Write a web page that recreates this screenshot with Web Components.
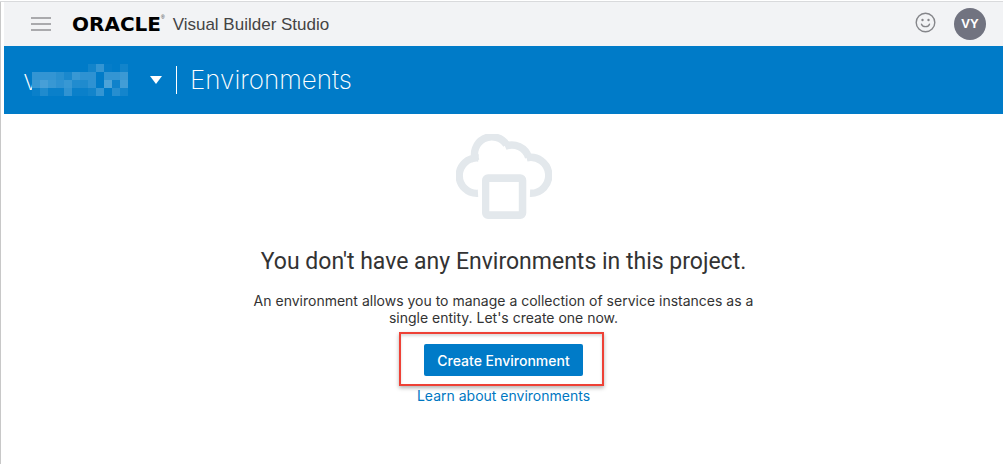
<!DOCTYPE html>
<html lang="en">
<head>
<meta charset="utf-8">
<title>Environments</title>
<style>
body { margin: 0; background: #fff; font-family: Inter, "Liberation Sans", sans-serif; color: #333; }
</style>
</head>
<body>
<vb-app></vb-app>
<script>
const define = (name, html, setup) => customElements.define(name, class extends HTMLElement {
  constructor() {
    super();
    this.attachShadow({ mode: "open" }).innerHTML = html;
    if (setup) setup(this.shadowRoot);
  }
});

define("vb-topbar", `
<style>
:host { display: flex; align-items: center; box-sizing: border-box; height: 44px; padding: 0 17px 0 27px; background: #f2f3f5; }
button { border: 0; padding: 0; background: none; font: inherit; display: block; }
svg { display: block; }
.brand { display: flex; align-items: center; margin-left: 21px; flex: 1; }
.logo { font: bold 20px/24px "DejaVu Sans", sans-serif; color: #000; }
.reg { align-self: flex-start; font: 5px/12px "Liberation Sans", sans-serif; color: #333; }
.product { margin-left: 8px; padding-top: 2px; font: 17px/24px "Liberation Sans", sans-serif; color: #444; }
.feedback { padding-bottom: 4px; }
.avatar { margin-left: 18px; width: 32px; height: 32px; border-radius: 50%; background: #717380; color: #fff; font: bold 13px/32px "Liberation Sans", sans-serif; text-align: center; }
</style>
<button aria-label="Menu"><svg width="20" height="14" viewBox="0 0 20 14" stroke="#929395" stroke-width="1.500"><path d="M0 1h20M0 7h20M0 13h20"/></svg></button>
<div class="brand"><span class="logo">ORACLE</span><span class="reg">®</span><span class="product">Visual Builder Studio</span></div>
<button class="feedback" aria-label="Feedback"><svg width="21" height="21" viewBox="0 0 21 21" fill="none" stroke="#85868a" stroke-width="1.400"><circle cx="10.500" cy="10.500" r="9.300"/><path d="M6.500 12.200c1.200 3.200 6.800 3.200 8 0" stroke-linecap="round"/><circle cx="7.500" cy="8" r="1.200" fill="#85868a" stroke="none"/><circle cx="13.500" cy="8" r="1.200" fill="#85868a" stroke="none"/></svg></button>
<button class="avatar">VY</button>
`);

define("vb-titlebar", `
<style>
:host { display: flex; align-items: center; box-sizing: border-box; height: 68px; padding: 0 19px; background: #007bc8; color: #fff; }
button { display: flex; align-items: center; gap: 22px; border: 0; padding: 0; background: none; color: inherit; }
.name { display: flex; align-items: center; font: 200 28px/32px Inter, sans-serif; }
.initial { width: 9px; text-align: left; }
svg { display: block; }
.mask { position: relative; background: #007bc8; }
h1 { margin: 0 0 0 14px; padding-left: 13px; border-left: 1px solid #fff; font: 200 26px/28px Inter, sans-serif; }
</style>
<button aria-haspopup="true" aria-label="Project"><span class="name"><span class="initial">v</span><svg class="mask" width="96" height="32" viewBox="0 0 12 4" shape-rendering="crispEdges" fill="#fff"></svg></span><svg width="12" height="8" viewBox="0 0 12 8" fill="#fff"><path d="M0 0h12L6 8z"/></svg></button>
<h1>Environments</h1>
`, root => {
  // Redacted project name: opacity (percent) of each mosaic cell
  const cells = [
    [0, 0, 0, 0, 0, 0, 0, 7, 20, 2, 0, 7],
    [20, 20, 20, 16, 10, 22, 18, 18, 0, 20, 20, 23],
    [22, 28, 22, 18, 22, 13, 12, 18, 0, 30, 6, 26],
    [4, 12, 4, 4, 19, 4, 4, 7, 20, 0, 15, 8]
  ];
  root.querySelector(".mask").innerHTML = cells.flatMap((row, y) => row.map((a, x) =>
    `<rect x="${x}" y="${y}" width="1" height="1" fill-opacity="${a / 100}"/>`)).join("");
});

define("vb-empty-state", `
<style>
:host { display: flex; flex-direction: column; align-items: center; padding: 20px 16px; text-align: center; }
svg { display: block; }
h2 { margin: 26px 0 0; font: 400 23px/32px Roboto, sans-serif; color: #333; }
p { margin: 14px 0 0; max-width: 510px; font: 14px/17px Inter, sans-serif; color: #333; }
</style>
<svg width="96" height="86" viewBox="0 0 96 86" fill="none" stroke="#e3e8ec" stroke-width="7.400">
<path d="M22 59.300A17.700 17.700 0 1 1 22.500 24"/>
<path d="M19.900 27A17.400 17.400 0 0 1 50.500 10.700"/>
<path d="M49 12.400A17.500 17.500 0 0 1 72.600 23.500"/>
<path d="M70.600 23.800A18 18 0 1 1 74 59.300"/>
<path fill="#e3e8ec" stroke="none" fill-rule="evenodd" d="M32 40.300h32.300a6 6 0 0 1 6 6v32.700a6 6 0 0 1-6 6H32a6 6 0 0 1-6-6V46.300a6 6 0 0 1 6-6zM33.300 48v29.300h29.500V48z"/>
</svg>
<h2><slot name="title"></slot></h2>
<p><slot name="text"></slot></p>
<slot name="action"></slot>
<slot name="link"></slot>
`);

define("vb-action", `
<style>
:host { display: block; position: relative; margin-top: 18px; }
.callout { position: absolute; inset: -12px -21px -10px -25px; border: 2px solid #ee4136; box-shadow: 0 2px 4px rgba(0,0,0,.3), inset 0 2px 3px rgba(0,0,0,.15); pointer-events: none; }
button { display: block; height: 32px; padding: 0 13px; border: 0; border-radius: 2px; background: #007bc8; color: #fff; font: 500 14px/34px Inter, sans-serif; }
</style>
<button><slot></slot></button>
<div class="callout"></div>
`);

define("vb-link", `
<style>
:host { display: block; margin-top: 11px; }
a { display: block; color: #0077c2; text-decoration: none; font: 14px/17px Inter, sans-serif; }
</style>
<a href="#"><slot></slot></a>
`);

define("vb-app", `
<style>
:host { display: block; box-sizing: border-box; min-height: 100vh; border-left: 1px solid #c8c8c8; padding-left: 3px; }
.edge { height: 2px; margin-left: -4px; box-sizing: border-box; border-bottom: 1px solid #d9dadc; background: #fff; }
</style>
<div class="edge"></div>
<vb-topbar></vb-topbar>
<vb-titlebar></vb-titlebar>
<main><vb-empty-state>
<span slot="title">You don't have any Environments in this project.</span>
<span slot="text">An environment allows you to manage a collection of service instances as a single entity. Let's create one now.</span>
<vb-action slot="action">Create Environment</vb-action>
<vb-link slot="link">Learn about environments</vb-link>
</vb-empty-state></main>
`);
</script>
</body>
</html>
